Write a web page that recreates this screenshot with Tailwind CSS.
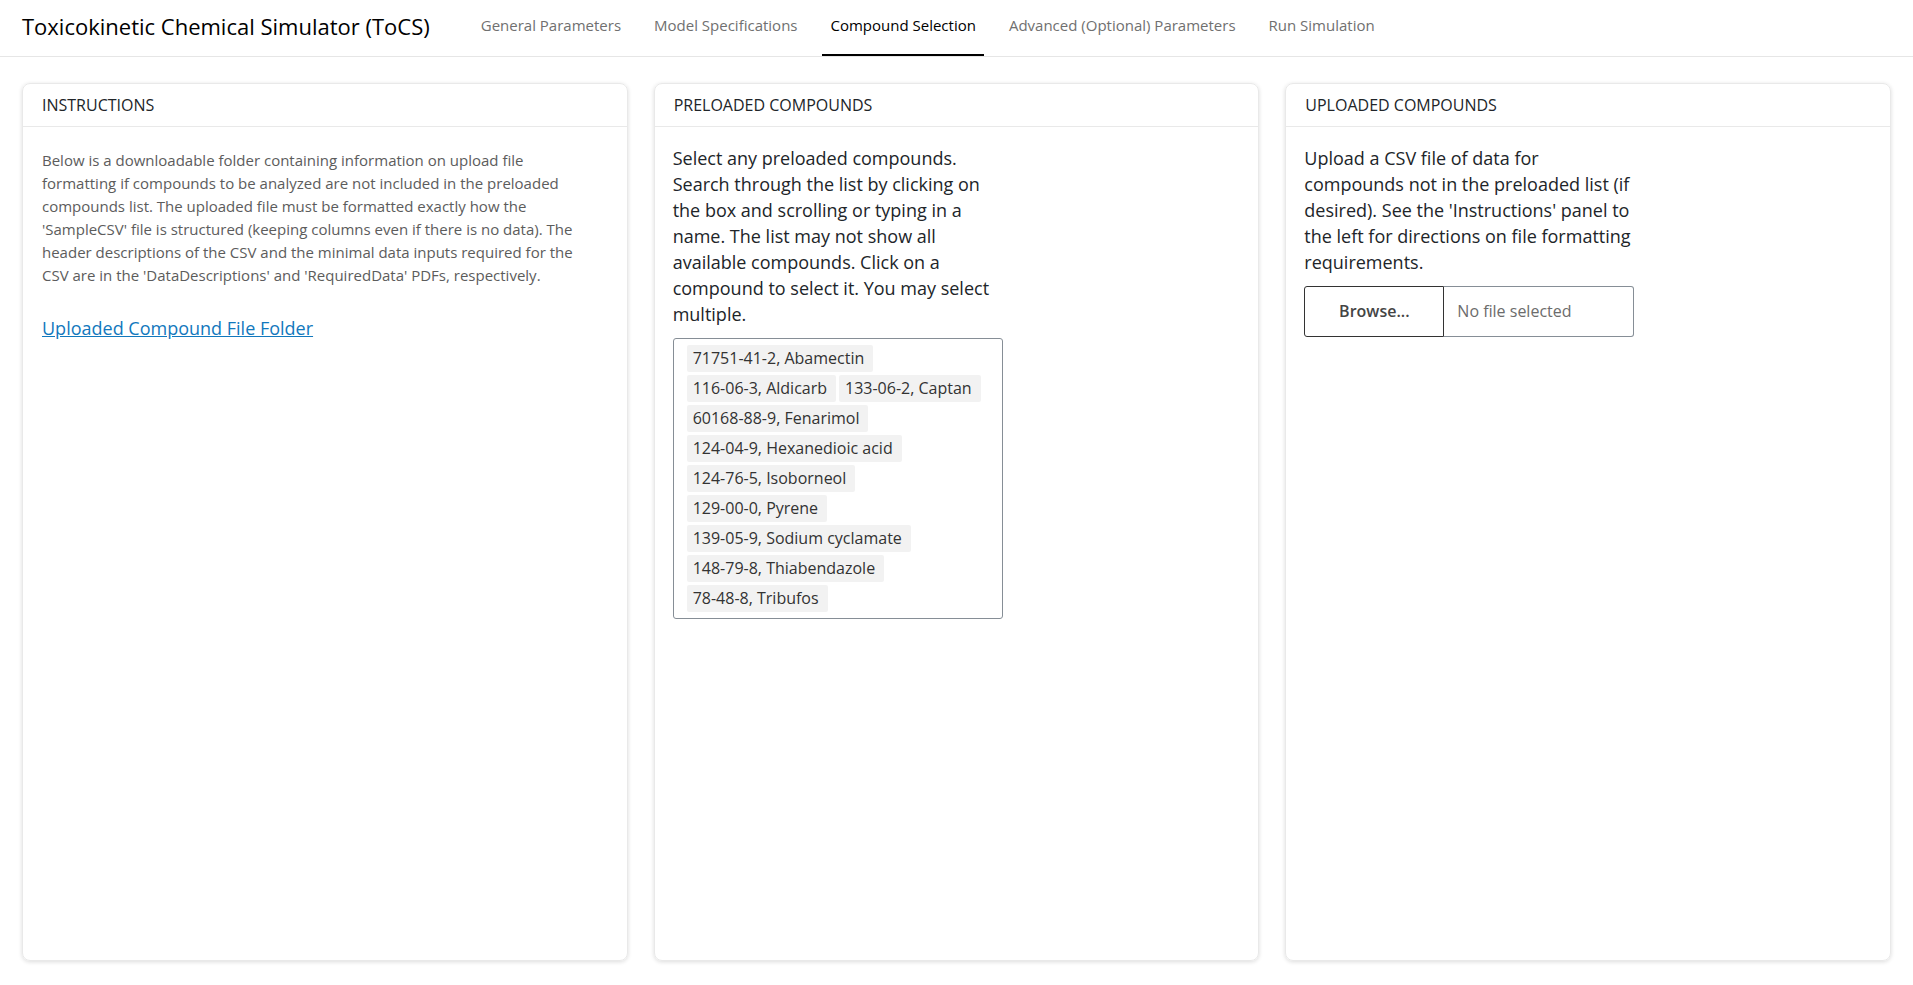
<!DOCTYPE html>
<html lang="en">
<head>
<meta charset="utf-8">
<title>Toxicokinetic Chemical Simulator (ToCS)</title>
<script src="https://cdn.jsdelivr.net/npm/@tailwindcss/browser@4"></script>
</head>
<body class="flex min-h-screen flex-col bg-white font-['Open_Sans',sans-serif] text-[#212529]">
<header class="flex items-stretch border-b border-[#e6e6e6] px-[22px]">
  <a href="#" class="flex h-14 items-center pb-1 text-[22px] leading-8 text-black">Toxicokinetic Chemical Simulator (ToCS)</a>
  <nav class="ml-[43px] flex items-stretch gap-[17px] text-[15px] leading-6 text-[#707070]">
    <a href="#" class="flex items-center border-b-2 border-transparent px-2 pb-1">General Parameters</a>
    <a href="#" class="flex items-center border-b-2 border-transparent px-2 pb-1">Model Specifications</a>
    <a href="#" aria-current="page" class="flex items-center border-b-2 border-black px-2 pb-1 font-medium text-black">Compound Selection</a>
    <a href="#" class="flex items-center border-b-2 border-transparent px-2 pb-1">Advanced (Optional) Parameters</a>
    <a href="#" class="flex items-center border-b-2 border-transparent px-2 pb-1">Run Simulation</a>
  </nav>
</header>
<main class="grid flex-1 grid-cols-3 gap-[26px] px-[22px] pt-[26px] pb-6">
  <section class="rounded-lg border border-[#e9e9e9] shadow-[0_1px_4px_rgba(0,0,0,0.14)]">
    <h2 class="border-b border-[#e9e9e9] px-[19px] py-[9px] text-base font-medium leading-6">INSTRUCTIONS</h2>
    <div class="pt-[22px] pr-[38px] pl-[19px]">
      <p class="text-[15px] leading-[23px] text-[#5c5c5c]">Below is a downloadable folder containing information on upload file formatting if compounds to be analyzed are not included in the preloaded compounds list. The uploaded file must be formatted exactly how the 'SampleCSV' file is structured (keeping columns even if there is no data). The header descriptions of the CSV and the minimal data inputs required for the CSV are in the 'DataDescriptions' and 'RequiredData' PDFs, respectively.</p>
      <a href="#" class="mt-7 inline-block text-[18px] leading-[26px] text-[#1278bd] underline">Uploaded Compound File Folder</a>
    </div>
  </section>
  <section class="rounded-lg border border-[#e9e9e9] shadow-[0_1px_4px_rgba(0,0,0,0.14)]">
    <h2 class="border-b border-[#e9e9e9] px-[19px] py-[9px] text-base font-medium leading-6">PRELOADED COMPOUNDS</h2>
    <div class="px-[18px] pt-[18px]">
      <label for="compounds" class="block w-[330px] text-[18px] leading-[26px]">Select any preloaded compounds. Search through the list by clicking on the box and scrolling or typing in a name. The list may not show all available compounds. Click on a compound to select it. You may select multiple.</label>
      <div class="mt-[11px] flex w-[330px] flex-wrap gap-[3px] rounded-[3px] border border-[#868e96] px-[13px] py-[6px] text-base leading-[23px] text-[#333]">
        <span class="rounded-xs bg-[#f2f2f2] py-[2px] pr-[9px] pl-[6px]">71751-41-2, Abamectin</span>
        <span class="rounded-xs bg-[#f2f2f2] py-[2px] pr-[9px] pl-[6px]">116-06-3, Aldicarb</span>
        <span class="rounded-xs bg-[#f2f2f2] py-[2px] pr-[9px] pl-[6px]">133-06-2, Captan</span>
        <span class="rounded-xs bg-[#f2f2f2] py-[2px] pr-[9px] pl-[6px]">60168-88-9, Fenarimol</span>
        <span class="rounded-xs bg-[#f2f2f2] py-[2px] pr-[9px] pl-[6px]">124-04-9, Hexanedioic acid</span>
        <span class="rounded-xs bg-[#f2f2f2] py-[2px] pr-[9px] pl-[6px]">124-76-5, Isoborneol</span>
        <span class="rounded-xs bg-[#f2f2f2] py-[2px] pr-[9px] pl-[6px]">129-00-0, Pyrene</span>
        <span class="rounded-xs bg-[#f2f2f2] py-[2px] pr-[9px] pl-[6px]">139-05-9, Sodium cyclamate</span>
        <span class="rounded-xs bg-[#f2f2f2] py-[2px] pr-[9px] pl-[6px]">148-79-8, Thiabendazole</span>
        <span class="rounded-xs bg-[#f2f2f2] py-[2px] pr-[9px] pl-[6px]">78-48-8, Tribufos</span>
        <input id="compounds" type="text" autocomplete="off" class="w-1 outline-none">
      </div>
    </div>
  </section>
  <section class="rounded-lg border border-[#e9e9e9] shadow-[0_1px_4px_rgba(0,0,0,0.14)]">
    <h2 class="border-b border-[#e9e9e9] px-[19px] py-[9px] text-base font-medium leading-6">UPLOADED COMPOUNDS</h2>
    <div class="px-[18px] pt-[18px]">
      <label for="upload" class="block w-[330px] text-[18px] leading-[26px]">Upload a CSV file of data for compounds not in the preloaded list (if desired). See the 'Instructions' panel to the left for directions on file formatting requirements.</label>
      <div class="mt-[11px] flex h-[51px] w-[330px] text-base">
        <button type="button" class="w-[140px] shrink-0 rounded-l-[3px] border border-[#333] pb-[2px] font-semibold text-[#444]">Browse...</button>
        <input id="upload" type="text" readonly placeholder="No file selected" class="min-w-0 flex-1 rounded-r-[3px] border border-l-0 border-[#868e96] px-[13px] pb-[2px] placeholder:text-[#6c6c6c] outline-none">
      </div>
    </div>
  </section>
</main>
</body>
</html>
